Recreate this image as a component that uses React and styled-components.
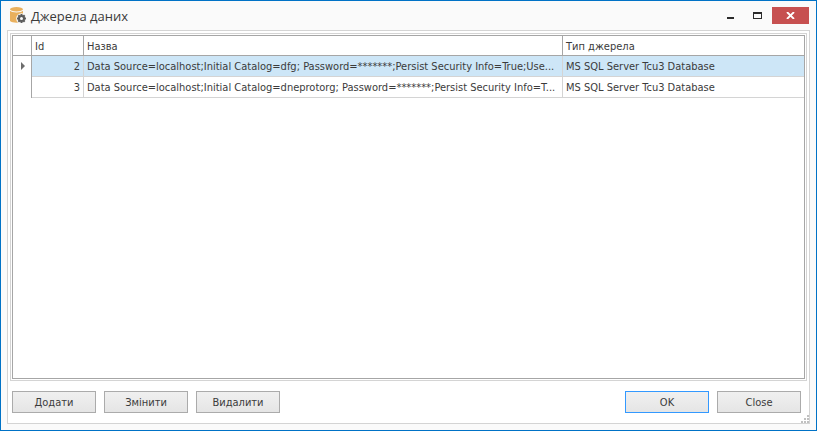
import React from "react";
import styled, { createGlobalStyle } from "styled-components";

const GlobalStyle = createGlobalStyle`
  * { box-sizing: border-box; }
  body { margin: 0; background: #fafafa; }
`;

const Window = styled.main`
  display: flex;
  flex-direction: column;
  min-height: 100vh;
  padding: 0 6px 6px;
  border: 1px solid #0072c6;
  background: #fafafa;
  color: #3b3b3b;
  font: 11px/14px "DejaVu Sans Condensed", "DejaVu Sans", sans-serif;
`;

const TitleBar = styled.header`
  display: flex;
  align-items: center;
  height: 29px;
  padding: 0 1px 0 2px;
`;

const AppIcon = styled.svg`
  width: 18px;
  height: 17px;
  margin-right: 4px;
`;

const Title = styled.h1`
  flex: 1;
  margin: 0;
  font: 13px/20px "Open Sans", sans-serif;
`;

const WindowButton = styled.button`
  display: flex;
  align-items: center;
  justify-content: center;
  width: ${(p) => (p.$close ? "37px" : "27px")};
  height: 17px;
  margin-left: ${(p) => (p.$close ? "1px" : "0")};
  padding: 0;
  border: 0;
  background: ${(p) => (p.$close ? "#c75050" : "transparent")};
`;

const Client = styled.section`
  position: relative;
  flex: 1;
  display: flex;
  flex-direction: column;
  padding: 2px;
  border: 1px solid #d4d4d4;
  background: #fff;
`;

const GridGroup = styled.div`
  flex: 1;
  display: flex;
  padding: 1px;
  border: 1px solid #d4d4d4;
`;

const GridFrame = styled.div`
  flex: 1;
  min-width: 0;
  overflow: auto;
  border: 1px solid #a6a6a6;
`;

const Grid = styled.table`
  width: 100%;
  table-layout: fixed;
  border-collapse: separate;
  border-spacing: 0;
`;

const Column = styled.col`
  width: ${(p) => p.$width};
`;

const HeadCell = styled.th`
  height: 20px;
  padding: 2px 3px 0;
  border: 0 solid #a6a6a6;
  border-width: 0 1px 1px 0;
  font-weight: 400;
  text-align: left;
  white-space: nowrap;
  &:last-child { border-right: 0; }
`;

const Row = styled.tr`
  --row-fill: ${(p) => (p.$selected ? "#cde6f7" : "#fff")};
`;

const Cell = styled.td`
  height: 21px;
  padding: 2px 3px 0;
  overflow: hidden;
  border: 0 solid #d4d4d4;
  border-width: 0 1px 1px 0;
  background: var(--row-fill);
  text-align: ${(p) => (p.$numeric ? "right" : "left")};
  white-space: nowrap;
  &:last-child { border-right: 0; }
`;

const Indicator = styled.td`
  padding: 0 0 2px 8px;
  border-right: 1px solid #a6a6a6;
  &::before {
    content: "";
    display: ${(p) => (p.$current ? "block" : "none")};
    width: 0;
    border: solid transparent;
    border-width: 4px 0 4px 4px;
    border-left-color: #6d6d6d;
  }
`;

const Actions = styled.footer`
  display: flex;
  gap: 8px;
  padding: 10px 6px 8px 2px;
`;

const Spacer = styled.div`
  flex: 1;
`;

const Button = styled.button`
  width: 84px;
  height: 22px;
  padding: 2px 0 0;
  border: 1px solid ${(p) => (p.$primary ? "#3399ff" : "#ababab")};
  background: linear-gradient(#f0f0f0, #e5e5e5);
  color: inherit;
  font: inherit;
`;

const SizeGrip = styled.svg`
  position: absolute;
  right: 0;
  bottom: 0;
  width: 8px;
  height: 8px;
`;

const rows = [
  { id: 2, name: "Data Source=localhost;Initial Catalog=dfg; Password=*******;Persist Security Info=True;Use...", type: "MS SQL Server Tcu3 Database" },
  { id: 3, name: "Data Source=localhost;Initial Catalog=dneprotorg; Password=*******;Persist Security Info=T...", type: "MS SQL Server Tcu3 Database" },
];

const teeth = [0, 45, 90, 135];

export default function App() {
  return (
    <>
      <GlobalStyle />
      <Window>
        <TitleBar>
          <AppIcon viewBox="0 0 18 17" aria-hidden="true">
            <path d="M1 3.800C3 6 12 6 14 3.800V14c-2 2.200-11 2.200-13 0z" fill="#e9b05d" />
            <ellipse cx="7.500" cy="2.300" rx="6.500" ry="2.200" fill="#e9b05d" />
            <circle cx="12.500" cy="11.500" r="5.300" fill="#fafafa" />
            <g fill="#5d5d5d">
              {teeth.map((a) => (
                <rect key={a} x="11.500" y="7" width="2" height="9" transform={`rotate(${a} 12.500 11.500)`} />
              ))}
              <circle cx="12.500" cy="11.500" r="3.500" />
            </g>
            <circle cx="12.500" cy="11.500" r="1.500" fill="#fafafa" />
          </AppIcon>
          <Title>Джерела даних</Title>
          <WindowButton aria-label="Minimize">
            <svg width="7" height="7"><path d="M0 5h7v2H0z" fill="#2b2b2b" /></svg>
          </WindowButton>
          <WindowButton aria-label="Maximize">
            <svg width="9" height="7"><path fillRule="evenodd" d="M0 0h9v7H0zM1 2v4h7V2z" fill="#2b2b2b" /></svg>
          </WindowButton>
          <WindowButton $close aria-label="Close window">
            <svg width="9" height="7"><path d="M1 0l7 7M8 0l-7 7" stroke="#fff" strokeWidth="1.800" /></svg>
          </WindowButton>
        </TitleBar>
        <Client>
          <GridGroup>
            <GridFrame>
              <Grid>
                <colgroup>
                  <Column $width="19px" />
                  <Column $width="52px" />
                  <Column $width="auto" />
                  <Column $width="241px" />
                </colgroup>
                <thead>
                  <tr>
                    <HeadCell aria-label="Current row" />
                    <HeadCell>Id</HeadCell>
                    <HeadCell>Назва</HeadCell>
                    <HeadCell>Тип джерела</HeadCell>
                  </tr>
                </thead>
                <tbody>
                  {rows.map((row, i) => (
                    <Row key={row.id} $selected={i === 0}>
                      <Indicator $current={i === 0} />
                      <Cell $numeric>{row.id}</Cell>
                      <Cell>{row.name}</Cell>
                      <Cell>{row.type}</Cell>
                    </Row>
                  ))}
                </tbody>
              </Grid>
            </GridFrame>
          </GridGroup>
          <Actions>
            <Button>Додати</Button>
            <Button>Змінити</Button>
            <Button>Видалити</Button>
            <Spacer />
            <Button $primary>OK</Button>
            <Button>Close</Button>
          </Actions>
          <SizeGrip viewBox="0 0 8 8" aria-hidden="true">
            <path d="M6 0h2v2H6zM3 3h2v2H3zM6 3h2v2H6zM0 6h2v2H0zM3 6h2v2H3zM6 6h2v2H6z" fill="#c0c0c0" />
          </SizeGrip>
        </Client>
      </Window>
    </>
  );
}
